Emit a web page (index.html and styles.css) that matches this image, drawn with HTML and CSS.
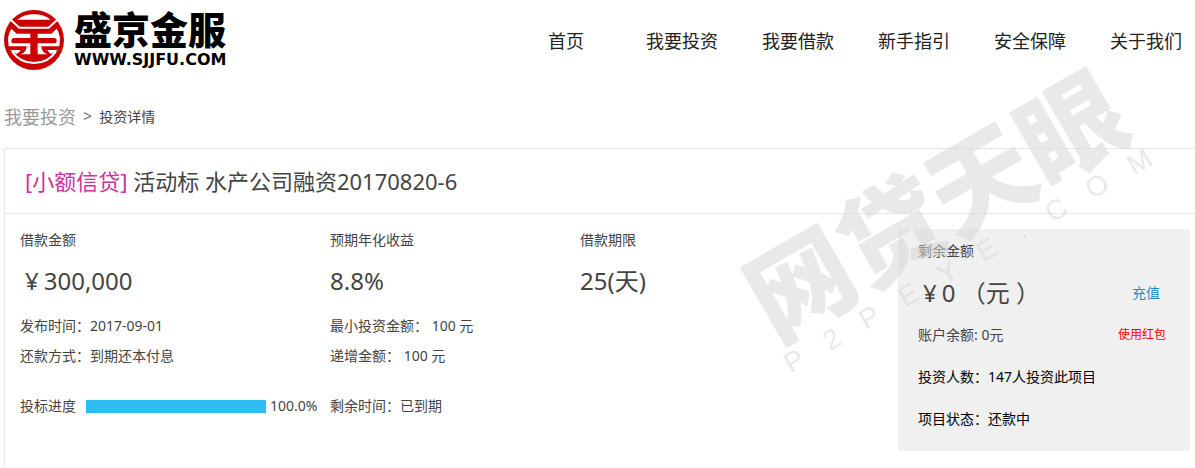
FILE: index.html
```html
<!DOCTYPE html>
<html lang="zh-CN">

<head>
    <meta charset="UTF-8" />
    <title>盛京金服 - 投资详情</title>
    <link rel="stylesheet" href="styles.css">
</head>

<body>

    <header class="header">
        <a class="logo" href="#">
            <svg class="logo-icon" viewBox="12 12 180 180" aria-hidden="true">
                <circle cx="102" cy="102" r="90" fill="#c00" />
                <g fill="#fff">
                    <path d="M52 41 Q72 25 102 25 Q132 25 152 41 Z" />
                    <path d="M26 50 L34 68 L50 83 H91 V96 H42 Q34 96 34 104 Q34 112 42 112 H91 V121 H26 Q20 88 34 68 Z" />
                    <path d="M178 50 L170 68 L154 83 H113 V96 H162 Q170 96 170 104 Q170 112 162 112 H113 V121 H178 Q184 88 170 68 Z" />
                    <path d="M91 121 V145 H62 Q80 138 80 121 Z" />
                    <path d="M113 121 V145 H142 Q124 138 124 121 Z" />
                    <path d="M30 132 H62 Q58 140 50 144 Z M174 132 H142 Q146 140 154 144 Z" />
                </g>
                <g fill="none" stroke="#fff" stroke-width="6">
                    <path d="M24 34 L58 65 H146 L180 34" />
                    <path d="M36 136 Q60 171 102 171 Q144 171 168 136" />
                </g>
            </svg>
            <span class="logo-text">
                <strong class="logo-name">盛京金服</strong>
                <span class="logo-url">WWW.SJJFU.COM</span>
            </span>
        </a>
        <nav class="nav">
            <a href="#">首页</a>
            <a href="#">我要投资</a>
            <a href="#">我要借款</a>
            <a href="#">新手指引</a>
            <a href="#">安全保障</a>
            <a href="#">关于我们</a>
        </nav>
    </header>

    <div class="crumbs">
        <a href="#">我要投资</a>
        <span class="arrow">&gt;</span>
        <span class="current">投资详情</span>
    </div>

    <main class="project">
        <h1 class="title"><span class="tag">[小额信贷]</span> 活动标 水产公司融资20170820-6</h1>

        <div class="detail">
            <div class="col">
                <div class="label">借款金额</div>
                <div class="value"><span class="yen">¥</span>300,000</div>
                <div class="row">发布时间：2017-09-01</div>
                <div class="row">还款方式：到期还本付息</div>
                <div class="row last">
                    <span>投标进度</span>
                    <span class="bar"><span class="bar-fill" style="width: 100%;"></span></span>
                    <span>100.0%</span>
                </div>
            </div>

            <div class="col">
                <div class="label">预期年化收益</div>
                <div class="value">8.8%</div>
                <div class="row">最小投资金额： 100 元</div>
                <div class="row">递增金额： 100 元</div>
                <div class="row last">剩余时间：已到期</div>
            </div>

            <div class="col">
                <div class="label">借款期限</div>
                <div class="value">25(天)</div>
            </div>

            <!-- 投资信息 -->
            <aside class="side">
                <div class="side-row">剩余金额</div>
                <div class="side-row">
                    <span class="amount"><span class="yen">¥</span>0 （元 ）</span>
                    <a class="recharge" href="#">充值</a>
                </div>
                <div class="side-row">
                    <span>账户余额: 0元</span>
                    <a class="bonus" href="#">使用红包</a>
                </div>
                <div class="side-row dark">投资人数：147人投资此项目</div>
                <div class="side-row dark">项目状态：还款中</div>
            </aside>
        </div>
    </main>

    <div class="watermark" aria-hidden="true">
        <div class="watermark-name">网贷天眼</div>
        <div class="watermark-url">
            <span>P</span><span>2</span><span>P</span><span>E</span><span>Y</span><span>E</span><span>.</span><span>C</span><span>O</span><span>M</span>
        </div>
    </div>

</body>

</html>
```
FILE: styles.css
```css
* {
    box-sizing: border-box;
}

body {
    position: relative;
    display: flex;
    flex-direction: column;
    min-height: 100vh;
    margin: 0;
    overflow-x: hidden;
    background: #fff;
    color: #444;
    font-family: "Noto Sans", "Noto Sans CJK SC", sans-serif;
    font-size: 14px;
}

a {
    color: inherit;
    text-decoration: none;
}

.header {
    display: flex;
    justify-content: space-between;
    align-items: center;
    height: 80px;
    padding: 0 13px 0 4px;
}

.logo {
    display: flex;
    align-items: center;
    gap: 10px;
    color: #000;
}

.logo-icon {
    width: 60px;
    height: 60px;
}

.logo-text {
    display: flex;
    flex-direction: column;
    gap: 4px;
}

.logo-name {
    font-family: "Noto Sans CJK SC", sans-serif;
    font-size: 38px;
    font-weight: 900;
    line-height: 36px;
}

.logo-url {
    font-family: "DejaVu Sans", sans-serif;
    font-size: 16px;
    font-weight: bold;
    line-height: 20px;
}

.nav {
    display: flex;
    gap: 44px;
    color: #222;
    font-size: 18px;
}

.nav a {
    width: 72px;
    text-align: center;
}

.crumbs {
    display: flex;
    align-items: center;
    gap: 7px;
    height: 68px;
    padding: 4px 4px 0;
    color: #999;
    font-size: 18px;
}

.crumbs .arrow {
    color: #777;
    font-size: 16px;
}

.crumbs .current {
    color: #444;
    font-size: 14px;
}

.project {
    flex: 1;
    margin-left: 4px;
    border-top: 1px solid #e6e6e6;
    border-left: 1px solid #e6e6e6;
}

.title {
    margin: 0;
    padding: 0 20px;
    border-bottom: 1px solid #e6e6e6;
    font-size: 22px;
    font-weight: normal;
    line-height: 64px;
}

.tag {
    color: #cc3399;
}

.detail {
    display: grid;
    grid-template-columns: 310px 250px 1fr 292px;
    align-items: start;
    padding: 0 5px 0 15px;
}

.col {
    padding-top: 11px;
    line-height: 30px;
}

.value {
    margin-bottom: 4px;
    font-size: 24px;
    line-height: 52px;
}

.yen {
    padding: 0 5px;
}

.row {
    display: flex;
    align-items: center;
    white-space: pre;
}

.last {
    margin-top: 20px;
}

.bar {
    width: 180px;
    height: 13px;
    margin: 0 4px 0 10px;
}

.bar-fill {
    display: block;
    height: 100%;
    background: #2dbdf2;
}

.side {
    margin-top: 15px;
    padding: 1px 24px 11px 20px;
    background: #f0f0f0;
    line-height: 42px;
}

.side-row {
    display: flex;
    justify-content: space-between;
    height: 42px;
}

.dark {
    color: #000;
}

.amount {
    font-size: 24px;
}

.recharge {
    padding-right: 6px;
    color: #1a8ccc;
}

.bonus {
    color: #f00;
    font-size: 12px;
}

/* 倾斜水印 */
.watermark {
    position: absolute;
    top: 146px;
    right: 43px;
    width: 420px;
    color: rgba(215, 215, 215, 0.55);
    pointer-events: none;
    transform: rotate(-30deg);
}

.watermark-name {
    font-family: "Noto Sans CJK SC", sans-serif;
    font-size: 104px;
    font-weight: 900;
    line-height: 104px;
    text-align: center;
}

.watermark-url {
    display: flex;
    justify-content: space-between;
    font-family: "Liberation Sans", sans-serif;
    font-size: 28px;
    line-height: 36px;
}
```
